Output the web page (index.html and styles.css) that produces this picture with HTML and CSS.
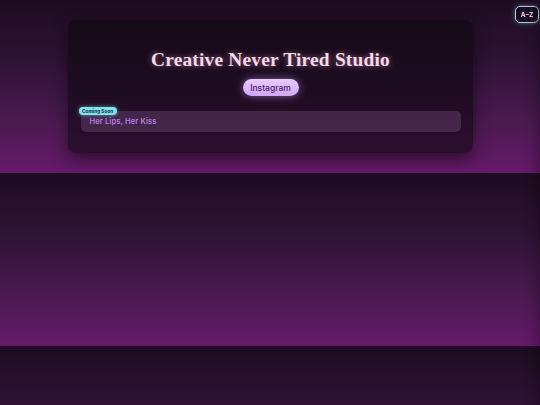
FILE: index.html
```html
<!DOCTYPE html>
<html lang="en">
<head>
<meta charset="utf-8">
<title>Creative Never Tired Studio</title>
<link rel="stylesheet" href="styles.css">
</head>
<body>
<main class="card">
  <h1 class="title">Creative Never Tired Studio</h1>
  <div class="links"><a class="btn" href="#">Instagram</a></div>
  <ul class="list">
    <li class="item"><span class="badge">Coming Soon</span><span class="item-text">Her Lips, Her Kiss</span></li>
  </ul>
</main>
<button class="az" type="button">A–Z</button>
<div class="drawer"></div>
</body>
</html>
```

FILE: styles.css
```css
html, body { margin: 0; padding: 0; }
body {
  background: linear-gradient(180deg, #1d0c21 0%, #2e1334 35%, #4a1a50 70%, #651a6a 100%);
  font-family: Inter, "Open Sans", sans-serif;
  padding: 20px 0;
}
.card {
  display: block;
  width: 405px;
  box-sizing: border-box;
  margin: 0 auto;
  padding: 28px 12px 21px 13px;
  border-radius: 8px;
  background: linear-gradient(180deg, #150a17 0%, #1d0c20 50%, #2b0f2f 100%);
  box-shadow: 0 6px 16px rgba(10, 0, 12, 0.55);
}
.title {
  margin: 0;
  text-align: center;
  font-family: "Liberation Serif", "DejaVu Serif", serif;
  font-weight: bold;
  font-size: 19.4px;
  line-height: 24px;
  letter-spacing: 0.2px;
  color: #f6d9ea;
  text-shadow: 0 0 6px rgba(255, 170, 220, 0.55);
}
.links { display: flex; justify-content: center; margin-top: 7px; }
.btn {
  display: flex; align-items: center; justify-content: center;
  width: 56px; height: 17px;
  border-radius: 999px;
  background: linear-gradient(180deg, #e8ccff 0%, #cfa6f6 100%);
  color: #4b1e70;
  font-size: 8.5px; font-weight: 500;
  text-decoration: none;
  box-shadow: 0 0 8px rgba(205, 150, 255, 0.55);
}
.list { list-style: none; margin: 15px 0 0; padding: 0; }
.item {
  position: relative;
  display: flex; align-items: center;
  height: 21px;
  padding-left: 9px;
  border-radius: 5px;
  background: rgba(140, 95, 150, 0.3);
}
.item-text { color: #ba7ee2; font-size: 7.6px; font-weight: 600; letter-spacing: 0.1px; }
.badge {
  position: absolute; top: -4px; left: -2px;
  height: 8px; padding: 0 3.5px;
  display: flex; align-items: center;
  border-radius: 4px;
  background: #80e2ee;
  color: #17283a;
  font-size: 4.8px; font-weight: 700;
  box-shadow: 0 0 4px rgba(128, 226, 238, 0.6);
}
.az {
  position: fixed; top: 6px; right: 1px;
  width: 24px; height: 17px; padding: 0;
  border: 1.5px solid #a4d4e6;
  border-radius: 5px;
  background: #1c0c22;
  color: #e6dcf4;
  font-family: Inter, sans-serif;
  font-size: 6.5px; font-weight: 700;
  box-shadow: 0 0 5px rgba(150, 210, 235, 0.45);
}
.drawer {
  position: fixed; top: 0; bottom: 0; right: -300px; width: 300px;
  box-shadow: 0 0 14px rgba(0, 0, 0, 0.45);
}
```
